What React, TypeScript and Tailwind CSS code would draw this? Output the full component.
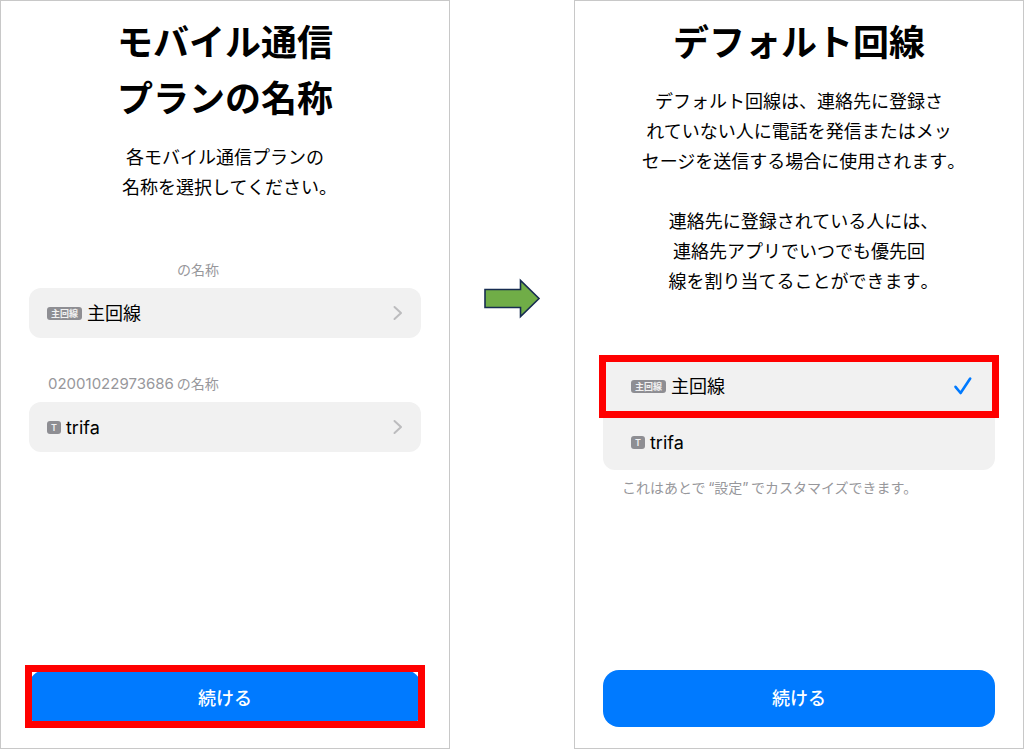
export default function App() {
  return (
    <div className="grid min-h-screen grid-cols-[450fr_124fr_450fr] bg-white font-['Inter','Noto_Sans_CJK_JP',sans-serif] text-black">
      <PlanNames />
      <div className="flex justify-center pt-[277px]">
        <Arrow />
      </div>
      <DefaultLine />
    </div>
  );
}

function PlanNames() {
  return (
    <section lang="ja" className="flex flex-col border border-[#c8c8c8] px-7 pt-[14px] pb-[21px]">
      <h1 className="text-center text-[36px] leading-[56px] font-bold">
        モバイル通信
        <br />
        プランの名称
      </h1>
      <p className="mt-4 text-center text-[18px] leading-[30px]">
        <Line text="各モバイル通信プランの" />
        <Line text="名称を選択してください" end="。" />
      </p>

      {/* Number is hidden for the first plan */}
      <div className="mt-[57px] flex px-[19px] text-[14px] leading-5 text-[#97979b]">
        <span className="w-[129px]" />
        の名称
      </div>
      <PlanButton badge="主回線" name="主回線" />

      <div className="mt-9 flex items-center gap-[3px] px-[19px] text-[14px] leading-5 text-[#97979b]">
        <span className="text-[15px]">02001022973686</span>
        <span>の名称</span>
      </div>
      <PlanButton badge="T" name="trifa" />

      <div className="relative mt-auto">
        <ContinueButton />
        <div className="pointer-events-none absolute -inset-x-1 -top-[5px] -bottom-px border-[7px] border-[#ff0000]" />
      </div>
    </section>
  );
}

function DefaultLine() {
  return (
    <section lang="ja" className="flex flex-col border border-[#c8c8c8] px-7 pt-[14px] pb-[21px]">
      <h1 className="text-center text-[36px] leading-[56px] font-bold">デフォルト回線</h1>
      <p className="mt-4 text-center text-[18px] leading-[30px]">
        <Line text="デフォルト回線は、連絡先に登録さ" />
        <Line text="れていない人に電話を発信またはメッ" />
        <Line text="セージを送信する場合に使用されます" end="。" />
      </p>
      <p className="mt-[30px] text-center text-[18px] leading-[30px]">
        <Line text="連絡先に登録されている人には" end="、" />
        <Line text="連絡先アプリでいつでも優先回" />
        <Line text="線を割り当てることができます" end="。" />
      </p>

      <div className="mt-[61px] rounded-xl bg-[#f1f1f1]">
        <div className="relative">
          <LineOption badge="主回線" name="主回線" value="primary" defaultChecked />
          <div className="pointer-events-none absolute -inset-x-1 -top-[3px] -bottom-[4px] border-[7px] border-[#ff0000]" />
        </div>
        <LineOption badge="T" name="trifa" value="trifa" />
      </div>
      <p className="mt-2 px-[19px] text-[14px] leading-5 text-[#97979b]">
        これはあとで{"\u2009"}“設定”{"\u2009"}でカスタマイズできます。
      </p>

      <div className="mt-auto">
        <ContinueButton />
      </div>
    </section>
  );
}

type LineProps = {
  text: string;
  end?: string;
};

// Closing punctuation is set half width so the line stays optically centred
function Line({ text, end }: LineProps) {
  return (
    <span className="block whitespace-nowrap">
      {text}
      {end && <span className="[font-feature-settings:'halt']">{end}</span>}
    </span>
  );
}

type PlanProps = {
  badge: string;
  name: string;
};

function PlanButton({ badge, name }: PlanProps) {
  return (
    <button
      type="button"
      className="mt-2 flex h-[50px] items-center rounded-xl bg-[#f1f1f1] px-[18px] text-[18px]"
    >
      <Badge text={badge} />
      <span className="ml-[5px]">{name}</span>
      <svg className="ml-auto" width="10" height="16" viewBox="0 0 10 16" fill="none">
        <path d="M1.5 2L8 8L1.5 14" stroke="#bcbcbe" strokeWidth="2" strokeLinecap="round" strokeLinejoin="round" />
      </svg>
    </button>
  );
}

type LineOptionProps = PlanProps & {
  value: string;
  defaultChecked?: boolean;
};

function LineOption({ badge, name, value, defaultChecked }: LineOptionProps) {
  return (
    <label className="relative flex h-14 items-center pr-[22px] pl-7 text-[18px]">
      <input type="radio" name="line" value={value} defaultChecked={defaultChecked} className="peer sr-only" />
      <Badge text={badge} />
      <span className="ml-[5px]">{name}</span>
      <svg className="invisible ml-auto peer-checked:visible" width="20" height="20" viewBox="0 0 20 20" fill="none">
        <path d="M2.5 10.8L7.6 17L17.2 2.5" stroke="#007aff" strokeWidth="2.6" strokeLinecap="round" strokeLinejoin="round" />
      </svg>
    </label>
  );
}

function Badge({ text }: { text: string }) {
  return (
    <span className="flex h-[13px] items-center justify-center rounded-[3px] bg-[#8e8e93] px-1 text-[9px] leading-none font-semibold text-[#f1f1f1]">
      {text}
    </span>
  );
}

function ContinueButton() {
  return (
    <button
      type="button"
      className="h-[57px] w-full rounded-2xl bg-[#007aff] text-[18px] font-medium text-white"
    >
      続ける
    </button>
  );
}

function Arrow() {
  return (
    <svg width="58" height="43" viewBox="0 0 58 43">
      <path
        d="M2 12.5H37.5V3.5L56 21.5L37.5 39.5V30.5H2Z"
        fill="#70ad47"
        stroke="#172c51"
        strokeWidth="1.6"
      />
    </svg>
  );
}
